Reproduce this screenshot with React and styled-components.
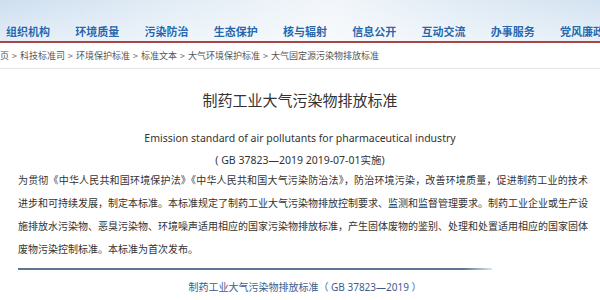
import React from 'react';
import styled, { createGlobalStyle } from 'styled-components';

const GlobalStyle = createGlobalStyle`
  html, body {
    margin: 0;
    padding: 0;
    background: #fff;
    overflow: hidden;
  }
  body {
    font-family: "Noto Sans", "Noto Sans CJK SC", sans-serif;
  }
`;

const Page = styled.div`
  width: 600px;
  height: 300px;
  overflow: hidden;
  background: #fff;
  display: flex;
  flex-direction: column;
`;

const Banner = styled.header`
  height: 41px;
  flex: none;
  display: flex;
  align-items: flex-end;
  background:
    linear-gradient(180deg, rgba(255, 255, 255, 0) 0%, rgba(255, 255, 255, 0.45) 100%),
    linear-gradient(90deg, #cddff0 0%, #e3edf6 30%, #f2f6fa 55%, #e0ebf5 78%, #d3e3f1 100%);
  border-bottom: 2px solid #a94545;
`;

const Nav = styled.nav`
  display: flex;
  gap: 25.25px;
  padding: 0 0 3px 6px;
  white-space: nowrap;
`;

const NavItem = styled.a`
  flex: none;
  width: 44px;
  font-family: "Noto Sans CJK SC", sans-serif;
  font-size: 11px;
  line-height: 14px;
  font-weight: 700;
  color: #2468ae;
  text-shadow: 0 0 2px #fff;
  text-decoration: none;
`;

const Crumbs = styled.div`
  height: 25px;
  flex: none;
  display: flex;
  align-items: center;
  margin-left: -9px;
  font-family: "Noto Sans CJK SC", sans-serif;
  font-size: 9px;
  color: #555;
  white-space: nowrap;
  border-bottom: 1px solid #e6e6e6;
`;

const Sep = styled.span`
  padding: 0 3px;
  color: #666;
`;

const Article = styled.article`
  display: flex;
  flex-direction: column;
  align-items: center;
  color: #333;
`;

const Title = styled.h1`
  margin: 21px 0 0;
  font-family: "Noto Sans CJK SC", sans-serif;
  font-size: 15px;
  line-height: 20px;
  font-weight: 400;
  color: #333;
`;

const Subtitle = styled.div`
  margin-top: ${(p) => p.$gap}px;
  font-size: 10.5px;
  line-height: 16px;
  color: #333;
`;

const Body = styled.div`
  align-self: stretch;
  margin: 0 12px 0 18px;
  font-family: "Noto Sans CJK SC", sans-serif;
  font-size: 10px;
  line-height: 23px;
  color: #333;
`;

const Line = styled.span`
  display: block;
  white-space: nowrap;
  text-align: justify;
  text-align-last: ${(p) => (p.$last ? 'left' : 'justify')};
`;

const Rule = styled.div`
  align-self: flex-start;
  width: 474px;
  height: 2px;
  margin: 8px 0 0 18px;
  background: linear-gradient(90deg, #5b7794 0%, #5b7794 94%, rgba(91, 119, 148, 0.2) 100%);
`;

const SourceLink = styled.a`
  margin: 9px 0 0 10px;
  font-family: "Noto Sans", "Noto Sans CJK SC", sans-serif;
  font-size: 10px;
  line-height: 16px;
  color: #3a5d8f;
  text-decoration: none;
`;

const navItems = ['组织机构', '环境质量', '污染防治', '生态保护', '核与辐射', '信息公开', '互动交流', '办事服务', '党风廉政'];

const crumbs = ['首页', '科技标准司', '环境保护标准', '标准文本', '大气环境保护标准', '大气固定源污染物排放标准'];

const lines = [
  '为贯彻《中华人民共和国环境保护法》《中华人民共和国大气污染防治法》，防治环境污染，改善环境质量，促进制药工业的技术',
  '进步和可持续发展，制定本标准。本标准规定了制药工业大气污染物排放控制要求、监测和监督管理要求。制药工业企业或生产设',
  '施排放水污染物、恶臭污染物、环境噪声适用相应的国家污染物排放标准，产生固体废物的鉴别、处理和处置适用相应的国家固体',
  '废物污染控制标准。本标准为首次发布。',
];

export default function App() {
  return (
    <Page>
      <GlobalStyle />
      <Banner>
        <Nav>
          {navItems.map((n) => (
            <NavItem key={n}>{n}</NavItem>
          ))}
        </Nav>
      </Banner>
      <Crumbs>
        {crumbs.map((c, i) => (
          <React.Fragment key={c}>
            {i > 0 && <Sep>&gt;</Sep>}
            <span>{c}</span>
          </React.Fragment>
        ))}
      </Crumbs>
      <Article>
        <Title>制药工业大气污染物排放标准</Title>
        <Subtitle $gap={20}>Emission standard of air pollutants for pharmaceutical industry</Subtitle>
        <Subtitle $gap={6}>( GB 37823—2019 2019-07-01实施)</Subtitle>
        <Body>
          {lines.map((l, i) => (
            <Line key={i} $last={i === lines.length - 1}>
              {l}
            </Line>
          ))}
        </Body>
        <Rule />
        <SourceLink>制药工业大气污染物排放标准（ GB 37823—2019 ）</SourceLink>
      </Article>
    </Page>
  );
}
